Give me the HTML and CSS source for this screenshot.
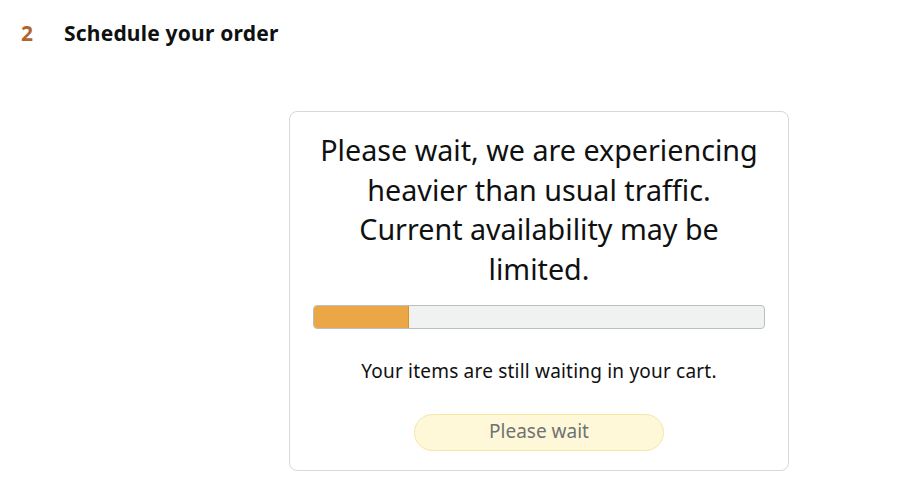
FILE: index.html
```html
<!DOCTYPE html>
<html lang="en">
<head>
    <meta charset="UTF-8">
    <meta name="viewport" content="width=device-width, initial-scale=1.0">
    <title>Schedule your order</title>
    <link rel="stylesheet" href="styles.css">
</head>
<body>
    <h2 class="step">
        <span class="step-num">2</span>
        <span class="step-title">Schedule your order</span>
    </h2>

    <section class="wait-wrap">
        <div class="wait-card">
            <p class="wait-msg">Please wait, we are experiencing heavier than usual traffic. Current availability may be limited.</p>
            <div class="progress">
                <div class="progress-fill" style="width: 21%"></div>
            </div>
            <p class="wait-note">Your items are still waiting in your cart.</p>
            <button class="wait-btn" disabled>Please wait</button>
        </div>
    </section>
</body>
</html>
```

FILE: styles.css
```css
* {
    box-sizing: border-box;
}
body {
    margin: 0;
    font-family: "Noto Sans", Arial, sans-serif;
    color: #0f1111;
    background: #fff;
}
.step {
    display: flex;
    align-items: center;
    margin: 0;
    padding: 20px 0 0 21px;
    font-size: 21px;
    line-height: 26px;
    font-weight: 700;
}
.step-num {
    width: 43px;
    color: #b0652f;
}
.step-title {
    letter-spacing: 0.2px;
}
.wait-wrap {
    padding: 65px 0 0 289px;
}
.wait-card {
    width: 500px;
    border: 1px solid #d5d9d9;
    border-radius: 8px;
    padding: 18px 23px 19px;
    display: flex;
    flex-direction: column;
    align-items: center;
}
.wait-msg {
    margin: 0;
    padding: 0 4px;
    font-size: 28.7px;
    line-height: 39.5px;
    text-align: center;
}
.progress {
    width: 100%;
    height: 24px;
    margin-top: 17px;
    background: #f0f2f2;
    border: 1px solid #bbbfbf;
    border-radius: 4px;
    overflow: hidden;
}
.progress-fill {
    height: 100%;
    background: #eba746;
    border-right: 1px solid #d8922f;
}
.wait-note {
    margin: 30px 0 0;
    font-size: 19px;
    line-height: 24px;
    letter-spacing: 0.2px;
}
.wait-btn {
    margin-top: 31px;
    width: 250px;
    height: 37px;
    padding: 0 0 3px;
    border: 1px solid #f5e6a6;
    border-radius: 20px;
    background: #fef8d8;
    color: #6f7373;
    font-family: inherit;
    font-size: 19px;
}
```
